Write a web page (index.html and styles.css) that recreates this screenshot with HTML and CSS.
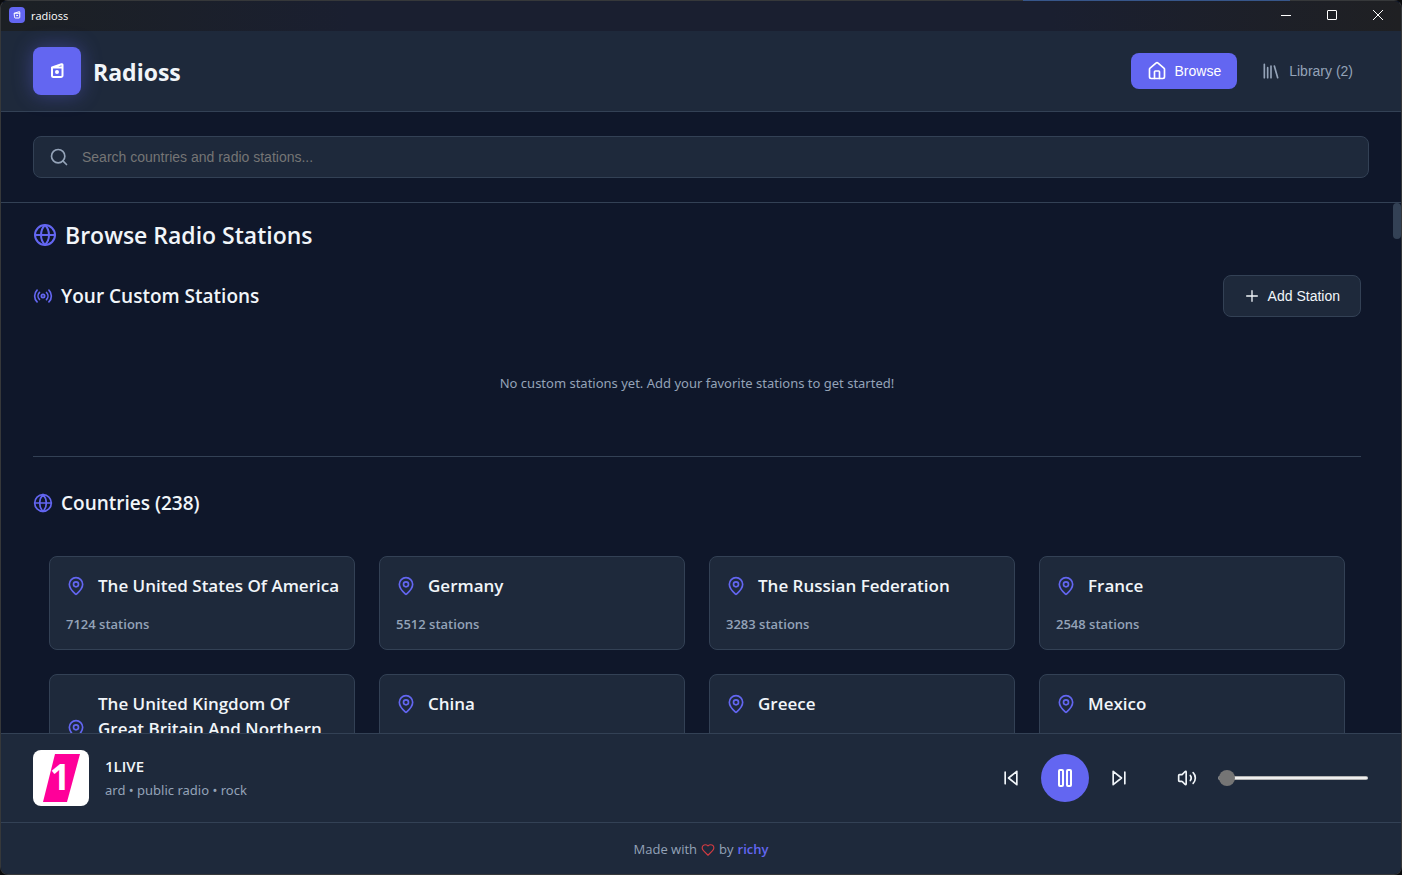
FILE: index.html
```html
<!DOCTYPE html>
<html lang="en">
<head>
    <meta charset="UTF-8">
    <title>radioss</title>
    <link rel="stylesheet" href="styles.css">
</head>

<body>

<!-- shared icons -->
<svg class="sprite" aria-hidden="true">
    <symbol id="logo" viewBox="0 0 48 48">
        <path d="M19 20.500h10.500v8a1.500 1.500 0 0 1-1.500 1.500h-7.500a1.500 1.500 0 0 1-1.500-1.500zM19 20.500l9.500-3.200q1-.2 1 .8v2.400"/>
        <circle cx="24" cy="25" r="1"/>
    </symbol>
    <symbol id="globe" viewBox="0 0 24 24">
        <circle cx="12" cy="12" r="10"/>
        <path d="M12 2a14.500 14.500 0 0 0 0 20 14.500 14.500 0 0 0 0-20M2 12h20"/>
    </symbol>
    <symbol id="pin" viewBox="0 0 24 24">
        <path d="M20 10c0 4.993-5.539 10.193-7.399 11.799a1 1 0 0 1-1.202 0C9.539 20.193 4 14.993 4 10a8 8 0 0 1 16 0"/>
        <circle cx="12" cy="10" r="3"/>
    </symbol>
</svg>

<div class="window">

    <div class="titlebar">
        <div class="titlebar-name">
            <svg class="icon titlebar-logo" viewBox="8 8 32 32"><use href="#logo" width="48" height="48"/></svg>
            <span>radioss</span>
        </div>
        <div class="titlebar-controls">
            <button type="button" aria-label="Minimize"><svg viewBox="0 0 10 10"><path d="M0 5.500h10"/></svg></button>
            <button type="button" aria-label="Maximize"><svg viewBox="0 0 10 10"><rect x="0.500" y="0.500" width="9" height="9" rx="0.500"/></svg></button>
            <button type="button" aria-label="Close"><svg viewBox="0 0 10 10"><path d="M0 0l10 10M10 0L0 10"/></svg></button>
        </div>
    </div>

    <header class="header">
        <div class="brand">
            <svg class="icon brand-logo"><use href="#logo"/></svg>
            <h1>Radioss</h1>
        </div>
        <nav class="nav">
            <button type="button" class="nav-btn active">
                <svg class="icon icon-20" viewBox="0 0 24 24"><path d="M15 21v-8a1 1 0 0 0-1-1h-4a1 1 0 0 0-1 1v8"/><path d="M3 10a2 2 0 0 1 .709-1.528l7-6a2 2 0 0 1 2.582 0l7 6A2 2 0 0 1 21 10v9a2 2 0 0 1-2 2H5a2 2 0 0 1-2-2z"/></svg>
                Browse
            </button>
            <button type="button" class="nav-btn">
                <svg class="icon icon-20" viewBox="0 0 24 24"><path d="m16 6 4 14M12 6v14M8 8v12M4 4v16"/></svg>
                Library (2)
            </button>
        </nav>
    </header>

    <div class="search">
        <label class="search-box">
            <svg class="icon icon-20" viewBox="0 0 24 24"><circle cx="11" cy="11" r="8"/><path d="m21 21-4.340-4.340"/></svg>
            <input type="text" aria-label="Search" placeholder="Search countries and radio stations...">
        </label>
    </div>

    <div class="content">
        <main class="content-inner">
            <h2 class="page-title"><svg class="icon icon-24"><use href="#globe"/></svg>Browse Radio Stations</h2>

            <section class="custom">
                <div class="section-header">
                    <h3><svg class="icon icon-20" viewBox="0 0 24 24"><path d="M4.900 19.100C1 15.200 1 8.800 4.900 4.900M7.800 16.200c-2.300-2.300-2.300-6.100 0-8.500M16.200 7.800c2.300 2.300 2.300 6.100 0 8.500M19.100 4.900C23 8.800 23 15.100 19.100 19"/><circle cx="12" cy="12" r="2"/></svg>Your Custom Stations</h3>
                    <button type="button" class="add-btn">
                        <svg class="icon icon-16" viewBox="0 0 24 24"><path d="M4 12h16M12 4v16"/></svg>
                        Add Station
                    </button>
                </div>
                <p class="empty">No custom stations yet. Add your favorite stations to get started!</p>
            </section>

            <section class="countries">
                <h3><svg class="icon icon-20"><use href="#globe"/></svg>Countries (238)</h3>
                <div class="grid">
                    <article class="card">
                        <h4><svg class="icon icon-20"><use href="#pin"/></svg><span>The United States Of America</span></h4>
                        <p>7124 stations</p>
                    </article>
                    <article class="card">
                        <h4><svg class="icon icon-20"><use href="#pin"/></svg><span>Germany</span></h4>
                        <p>5512 stations</p>
                    </article>
                    <article class="card">
                        <h4><svg class="icon icon-20"><use href="#pin"/></svg><span>The Russian Federation</span></h4>
                        <p>3283 stations</p>
                    </article>
                    <article class="card">
                        <h4><svg class="icon icon-20"><use href="#pin"/></svg><span>France</span></h4>
                        <p>2548 stations</p>
                    </article>
                    <article class="card">
                        <h4><svg class="icon icon-20"><use href="#pin"/></svg><span>The United Kingdom Of Great&nbsp;Britain And Northern Ireland</span></h4>
                    </article>
                    <article class="card">
                        <h4><svg class="icon icon-20"><use href="#pin"/></svg><span>China</span></h4>
                    </article>
                    <article class="card">
                        <h4><svg class="icon icon-20"><use href="#pin"/></svg><span>Greece</span></h4>
                    </article>
                    <article class="card">
                        <h4><svg class="icon icon-20"><use href="#pin"/></svg><span>Mexico</span></h4>
                    </article>
                </div>
            </section>
        </main>
        <div class="scrollbar"><div class="scrollbar-thumb"></div></div>
    </div>

    <div class="player">
        <div class="now-playing">
            <svg class="cover" viewBox="0 0 56 56">
                <path d="M22 4h25L34 52H10z"/>
                <text x="27" y="40">1</text>
            </svg>
            <div>
                <div class="station-name">1LIVE</div>
                <div class="station-tags">ard • public radio • rock</div>
            </div>
        </div>
        <div class="controls">
            <button type="button" class="control-btn" aria-label="Previous">
                <svg class="icon icon-20" viewBox="0 0 24 24"><path d="M19 20L9 12l10-8zM5 19V5"/></svg>
            </button>
            <button type="button" class="play-btn" aria-label="Pause">
                <svg class="icon icon-24" viewBox="0 0 24 24"><rect x="14" y="4" width="4" height="16" rx="1"/><rect x="6" y="4" width="4" height="16" rx="1"/></svg>
            </button>
            <button type="button" class="control-btn" aria-label="Next">
                <svg class="icon icon-20" viewBox="0 0 24 24"><path d="M5 4l10 8-10 8zM19 5v14"/></svg>
            </button>
        </div>
        <div class="volume">
            <button type="button" class="control-btn" aria-label="Mute">
                <svg class="icon icon-20" viewBox="0 0 24 24"><path d="M11 4.702a.705.705 0 0 0-1.203-.498L6.413 7.587A1.400 1.400 0 0 1 5.416 8H3a1 1 0 0 0-1 1v6a1 1 0 0 0 1 1h2.416a1.400 1.400 0 0 1 .997.413l3.383 3.384A.705.705 0 0 0 11 19.298zM16 9a5 5 0 0 1 0 6M19.364 18.364a9 9 0 0 0 0-12.728"/></svg>
            </button>
            <input type="range" class="volume-slider" aria-label="Volume" min="0" max="100" value="1">
        </div>
    </div>

    <footer class="footer">
        Made with
        <svg class="icon heart" viewBox="0 0 24 24"><path d="M19 14c1.490-1.460 3-3.210 3-5.500A5.500 5.500 0 0 0 16.500 3c-1.760 0-3 .5-4.500 2-1.500-1.500-2.740-2-4.500-2A5.500 5.500 0 0 0 2 8.500c0 2.300 1.500 4.050 3 5.500l7 7Z"/></svg>
        by <a href="#">richy</a>
    </footer>

</div>

</body>
</html>
```
FILE: styles.css
```css
* {
    box-sizing: border-box;
    margin: 0;
    padding: 0;
}

body {
    background: #0a0b0d;
    color: #f1f5f9;
    font-family: "Open Sans", "Noto Sans", sans-serif;
    font-size: 13px;
    overflow: hidden;
}

button,
input {
    font-family: "Liberation Sans", Arial, sans-serif;
    font-size: 14px;
    border: none;
    background: none;
    color: inherit;
}

.sprite {
    display: none;
}

.icon {
    flex: none;
    fill: none;
    stroke: currentColor;
    stroke-width: 2;
    stroke-linecap: round;
    stroke-linejoin: round;
}

.icon-16 {
    width: 16px;
    height: 16px;
}

.icon-20 {
    width: 20px;
    height: 20px;
}

.icon-24 {
    width: 24px;
    height: 24px;
}

.window {
    display: flex;
    flex-direction: column;
    height: 100vh;
    border: 1px solid #36383a;
    border-top-color: transparent;
    border-radius: 8px;
    background: linear-gradient(90deg, #36383a 73%, #37568a 73%, #37568a 92%, #36383a 92%) top / 100% 1px no-repeat border-box, #0f172a;
    overflow: hidden;
}

/* Title bar */

.titlebar {
    display: flex;
    justify-content: space-between;
    height: 30px;
    background: linear-gradient(90deg, #1c2024, #1a1f30 25%, #1a1f30 75%, #1f2023);
}

.titlebar-name {
    display: flex;
    align-items: center;
    gap: 6px;
    padding-left: 8px;
    padding-bottom: 2px;
    font-size: 11px;
    color: #fff;
}

.titlebar-logo {
    width: 16px;
    height: 16px;
    border-radius: 4px;
    background: #6366f1;
}

.titlebar-controls {
    display: flex;
}

.titlebar-controls button {
    display: flex;
    align-items: center;
    justify-content: center;
    width: 46px;
    padding-bottom: 2px;
}

.titlebar-controls svg {
    width: 10px;
    height: 10px;
    fill: none;
    stroke: #fff;
}

/* Header */

.header {
    display: flex;
    align-items: center;
    justify-content: space-between;
    padding: 16px 32px;
    background: #1e293b;
    border-bottom: 1px solid #334155;
}

.brand {
    display: flex;
    align-items: center;
    gap: 12px;
}

.brand-logo {
    width: 48px;
    height: 48px;
    border-radius: 8px;
    background: #6366f1;
    box-shadow: 0 0 20px rgba(99, 102, 241, 0.4);
    color: #fff;
}

.brand h1 {
    padding-top: 2px;
    font-size: 23px;
    line-height: 32px;
    font-weight: 700;
}

.nav {
    display: flex;
    gap: 8px;
}

.nav-btn {
    display: flex;
    align-items: center;
    gap: 8px;
    padding: 8px 16px;
    border-radius: 8px;
    color: #94a3b8;
}

.nav-btn.active {
    background: #6366f1;
    color: #fff;
}

/* Search */

.search {
    padding: 24px 32px;
    border-bottom: 1px solid #334155;
}

.search-box {
    display: flex;
    align-items: center;
    gap: 13px;
    height: 42px;
    padding: 0 15px;
    border: 1px solid #334155;
    border-radius: 8px;
    background: #1e293b;
    color: #94a3b8;
}

.search-box input {
    flex: 1;
    outline: none;
}

.search-box input::placeholder {
    color: #757575;
}

/* Content */

.content {
    display: flex;
    flex: 1;
    min-height: 0;
    overflow: hidden;
}

.content-inner {
    flex: 1;
    min-width: 0;
    padding: 16px 32px;
}

.scrollbar {
    width: 8px;
}

.scrollbar-thumb {
    height: 36px;
    border-radius: 4px;
    background: #334155;
}

h2,
h3 {
    display: flex;
    align-items: center;
    gap: 8px;
    font-weight: 600;
}

h2 .icon,
h3 .icon,
h4 .icon {
    color: #6366f1;
}

.page-title {
    margin-bottom: 24px;
    font-size: 23px;
    line-height: 32px;
}

h3 {
    font-size: 19px;
    line-height: 28px;
}

.custom {
    padding-bottom: 23px;
    border-bottom: 1px solid #334155;
    margin-bottom: 32px;
}

.section-header {
    display: flex;
    align-items: center;
    justify-content: space-between;
    margin-bottom: 16px;
}

.add-btn {
    display: flex;
    align-items: center;
    gap: 8px;
    height: 42px;
    padding: 0 20px;
    border: 1px solid #334155;
    border-radius: 8px;
    background: #1e293b;
}

.empty {
    padding: 40px;
    font-family: "Noto Sans", "Open Sans", sans-serif;
    line-height: 20px;
    text-align: center;
    color: #94a3b8;
}

.countries h3 {
    margin-bottom: 23px;
}

.grid {
    display: grid;
    grid-template-columns: repeat(auto-fill, minmax(280px, 1fr));
    gap: 24px;
    padding: 16px;
}

.card {
    padding: 16px 12px 16px 16px;
    border: 1px solid #334155;
    border-radius: 8px;
    background: #1e293b;
}

.card h4 {
    display: flex;
    align-items: center;
    gap: 12px;
    font-size: 17px;
    line-height: 25px;
    font-weight: 600;
}

.card p {
    margin-top: 18px;
    line-height: 17px;
    font-weight: 600;
    color: #94a3b8;
}

/* Player */

.player {
    display: flex;
    align-items: center;
    padding: 16px 32px;
    border-top: 1px solid #334155;
    background: #1e293b;
}

.now-playing {
    display: flex;
    align-items: center;
    gap: 16px;
    flex: 1;
}

.cover {
    width: 56px;
    height: 56px;
    border-radius: 8px;
    background: #fff;
    fill: #ff0099;
}

.cover text {
    font-family: "Open Sans", sans-serif;
    font-size: 36px;
    font-weight: 700;
    text-anchor: middle;
    fill: #fff;
}

.station-name {
    font-size: 15px;
    line-height: 24px;
    font-weight: 600;
}

.station-tags {
    font-family: "Noto Sans", "Open Sans", sans-serif;
    line-height: 24px;
    color: #94a3b8;
}

.controls,
.volume {
    display: flex;
    align-items: center;
    gap: 12px;
}

.volume {
    gap: 13px;
    margin-left: 32px;
}

.control-btn {
    display: flex;
    padding: 8px;
}

.play-btn {
    display: flex;
    padding: 12px;
    border-radius: 50%;
    background: #6366f1;
    color: #fff;
}

.volume-slider {
    appearance: none;
    width: 150px;
    height: 16px;
    margin-right: 1px;
}

.volume-slider::-webkit-slider-runnable-track {
    height: 4px;
    border: 1px solid #b2b2b2;
    border-width: 1px 0;
    border-radius: 2px;
    background: linear-gradient(90deg, #757575 8px, #efefef 8px);
}

.volume-slider::-webkit-slider-thumb {
    appearance: none;
    width: 16px;
    height: 16px;
    margin-top: -7px;
    border-radius: 50%;
    background: #757575;
}

/* Footer */

.footer {
    display: flex;
    align-items: center;
    justify-content: center;
    gap: 4px;
    padding: 17px 32px 15px;
    border-top: 1px solid #334155;
    background: #1e293b;
    line-height: 19px;
    color: #94a3b8;
}

.heart {
    width: 14px;
    height: 14px;
    color: #d13b42;
}

.footer a {
    color: #6366f1;
    font-weight: 600;
    text-decoration: none;
}
```
